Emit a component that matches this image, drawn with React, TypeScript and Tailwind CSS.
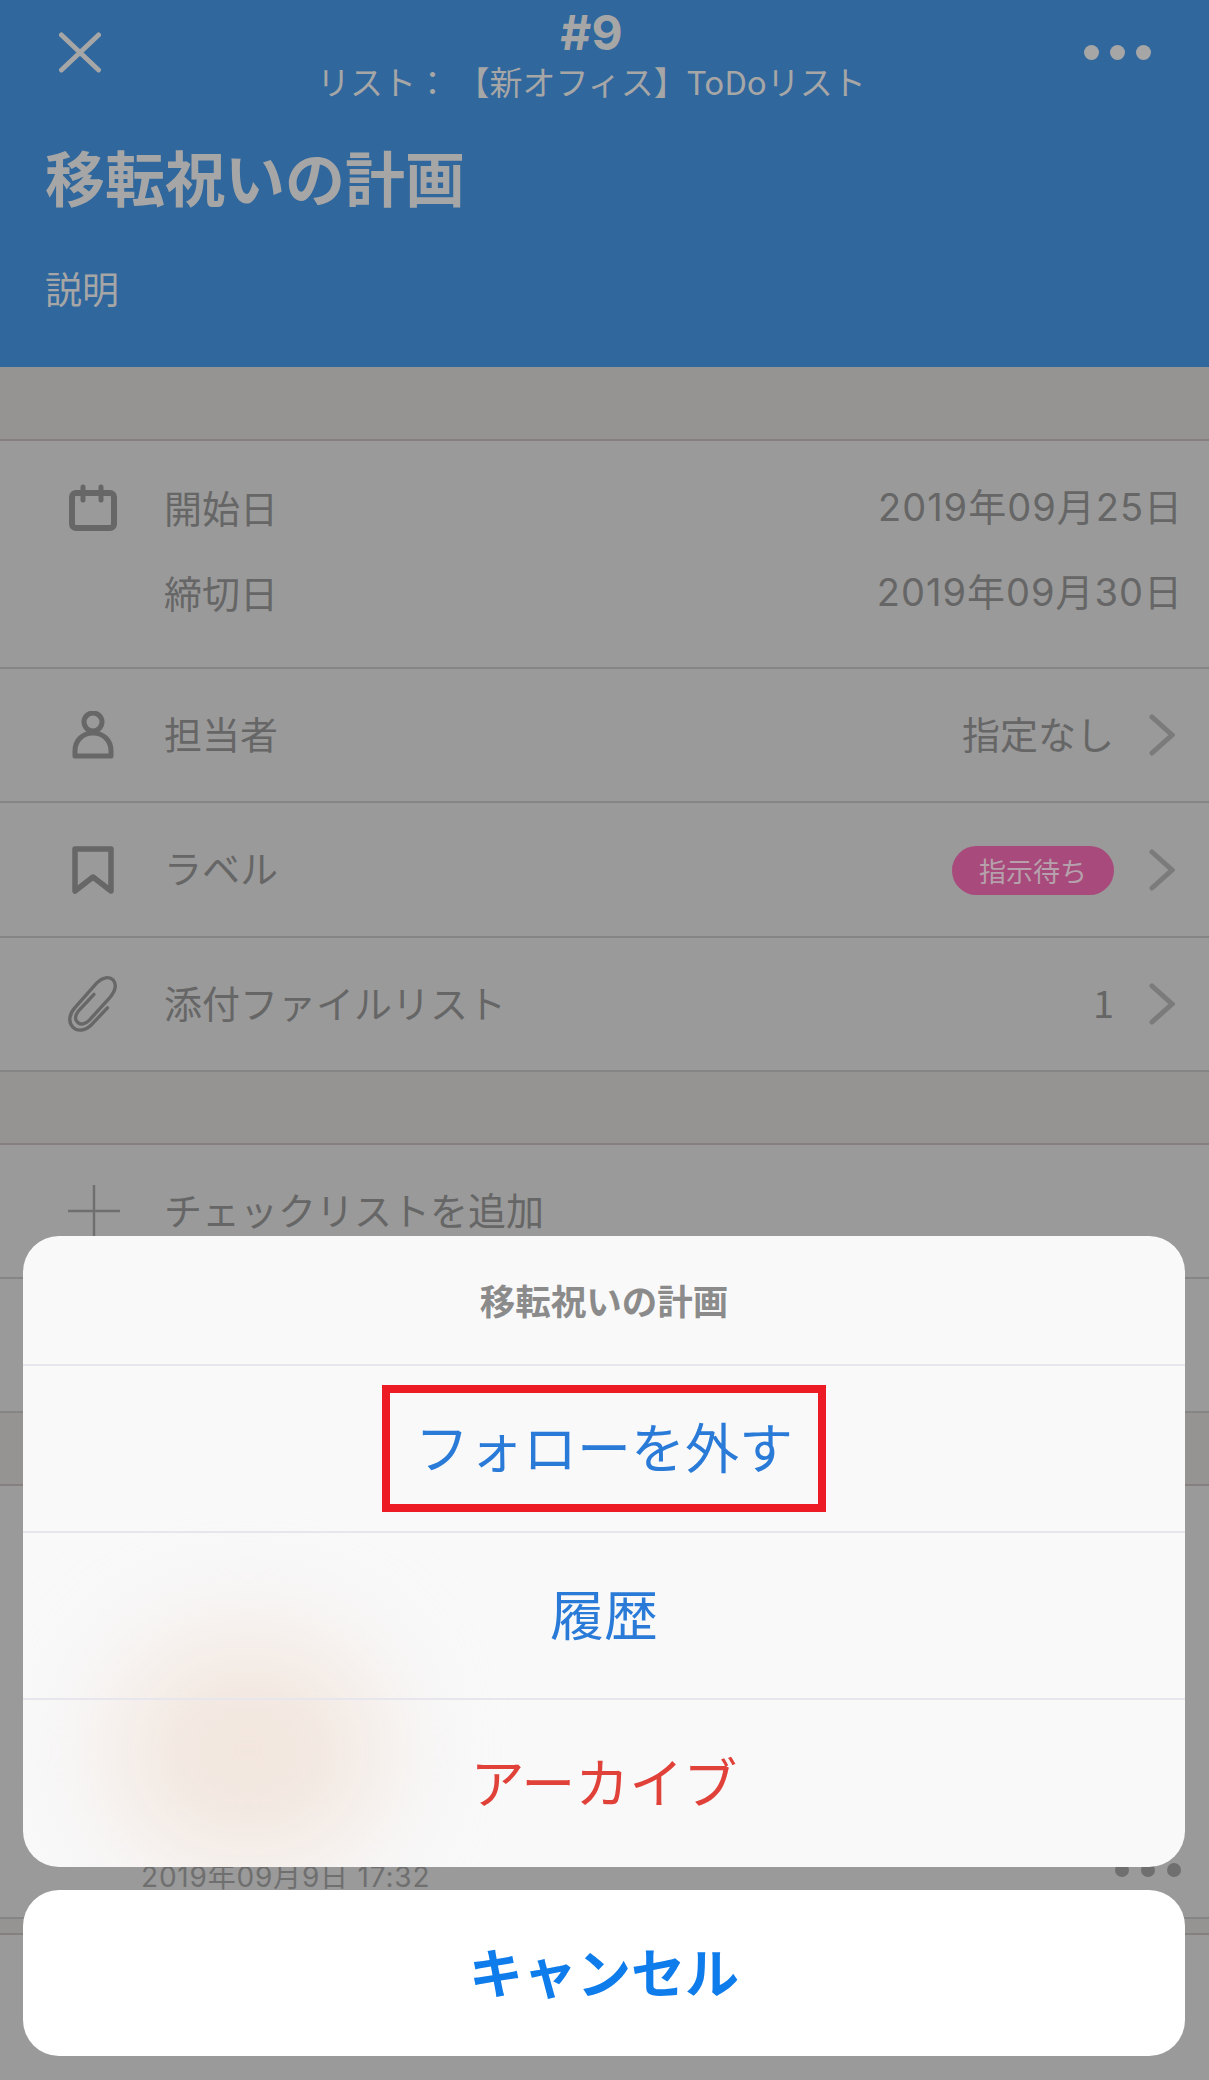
const font = "font-['Noto_Sans_CJK_JP','Noto_Sans',sans-serif]";
const dateFont = "font-['Inter','Noto_Sans_CJK_JP',sans-serif]";

function CalendarIcon() {
  return (
    <svg viewBox="0 0 50 48" className="w-[50px] h-[48px]" fill="none" stroke="#676767" strokeWidth="6" strokeLinecap="round">
      <rect x="4" y="9" width="42" height="35" rx="4" strokeLinejoin="round" />
      <path d="M15 3v13M33 3v13" strokeWidth="5" />
    </svg>
  );
}

function PersonIcon() {
  return (
    <svg viewBox="0 0 50 48" className="w-[50px] h-[48px]" fill="none" stroke="#676767" strokeWidth="5">
      <circle cx="25" cy="11" r="9" />
      <path d="M7 45v-5c0-11 8-18 18-18s18 7 18 18v5z" strokeLinejoin="round" />
    </svg>
  );
}

function BookmarkIcon() {
  return (
    <svg viewBox="0 0 50 48" className="w-[50px] h-[48px]" fill="none" stroke="#676767" strokeWidth="5.5" strokeLinejoin="round" strokeLinecap="round">
      <path d="M7 3h36v42L25 31 7 45z" />
    </svg>
  );
}

function ClipIcon() {
  return (
    <svg viewBox="0 0 52 60" className="w-[50px] h-[58px]" fill="none" stroke="#676767" strokeWidth="3.5" strokeLinecap="round">
      <path d="M27 20 11 37c-4 5-4 10-1 12 3 3 8 2 12-2l21-23c6-7 8-14 4-19-4-4-11-3-17 3L7 34c-7 8-6 16-2 20 5 5 13 4 20-3l16-17" />
    </svg>
  );
}

function PlusIcon() {
  return (
    <svg viewBox="0 0 54 54" className="w-[52px] h-[54px]" stroke="#6f6f6f" strokeWidth="2.5">
      <path d="M27 0v54M0 27h54" />
    </svg>
  );
}

function Chevron() {
  return (
    <svg viewBox="0 0 26 42" className="w-[26px] h-[42px] ml-[35px]" fill="none" stroke="#7b7b7b" strokeWidth="5" strokeLinecap="round">
      <path d="M3 3l20 18L3 39" />
    </svg>
  );
}

function Row({ icon, label, right, chevron = true, height }: { icon: React.ReactNode; label: string; right?: React.ReactNode; chevron?: boolean; height: string }) {
  return (
    <div className={`flex items-center pr-[34px] border-b-2 border-[#858585] ${height}`}>
      <div className="w-[164px] pl-[68px] shrink-0 flex items-center">{icon}</div>
      <span className="pb-[5px] text-[38px] leading-none text-[#666666]">{label}</span>
      <div className="ml-auto flex items-center text-[38px] leading-none text-[#666666]">
        {right}
        {chevron && <Chevron />}
      </div>
    </div>
  );
}

function SheetAction({ children, className }: { children: React.ReactNode; className: string }) {
  return <div className={`flex items-center justify-center h-[167px] pb-[5px] text-[54px] leading-none ${className}`}>{children}</div>;
}

export default function App() {
  return (
    <div className={`relative w-[1209px] h-[2080px] overflow-hidden bg-[#9a9a9a] ${font}`}>
      <header className="h-[367px] bg-[#30679d] text-[#a6a6a6] px-[45px]">
        <div className="relative h-[112px]">
          <svg viewBox="0 0 44 42" className="absolute left-[13px] top-[32px] w-[44px] h-[41px]" stroke="#a6a6a6" strokeWidth="5" strokeLinecap="round">
            <path d="M3 3l38 36M41 3 3 39" />
          </svg>
          <div className="flex flex-col items-center pr-[26px]">
            <span className={`mt-[6px] h-[54px] text-[48px] leading-[54px] font-bold ${dateFont}`}>#9</span>
            <span className="h-[42px] text-[33px] leading-[42px] font-normal">リスト： 【新オフィス】ToDoリスト</span>
          </div>
          <div className="absolute right-[13px] top-[45px] flex gap-[11px]">
            <span className="w-[15px] h-[15px] rounded-full bg-[#a6a6a6]" />
            <span className="w-[15px] h-[15px] rounded-full bg-[#a6a6a6]" />
            <span className="w-[15px] h-[15px] rounded-full bg-[#a6a6a6]" />
          </div>
        </div>
        <h1 className="mt-[25px] h-[78px] text-[60px] leading-[78px] font-bold">移転祝いの計画</h1>
        <p className="mt-[51px] text-[37px] leading-[44px]">説明</p>
      </header>

      <div className="h-[74px] bg-[#959493] border-b-2 border-[#857f80]" />

      <div className="flex h-[228px] border-b-2 border-[#858585]">
        <div className="w-[164px] pl-[68px] pt-[43px] shrink-0">
          <CalendarIcon />
        </div>
        <div className="flex-1 flex flex-col gap-[47px] pt-[47px] pr-[26px] text-[38px] leading-[38px] text-[#666666]">
          <div className="flex justify-between">
            <span>開始日</span>
            <span className={`tracking-[1px] ${dateFont}`}>2019年09月25日</span>
          </div>
          <div className="flex justify-between">
            <span>締切日</span>
            <span className={`tracking-[1px] ${dateFont}`}>2019年09月30日</span>
          </div>
        </div>
      </div>

      <Row height="h-[134px]" icon={<PersonIcon />} label="担当者" right={<span className="pb-[4px]">指定なし</span>} />
      <Row
        height="h-[135px]"
        icon={<BookmarkIcon />}
        label="ラベル"
        right={
          <span className="flex items-center justify-center w-[162px] h-[49px] mt-[2px] rounded-full bg-[#a84a7c] text-[27px] text-[#b5a0ab]">指示待ち</span>
        }
      />
      <Row height="h-[134px]" icon={<ClipIcon />} label="添付ファイルリスト" right={<span className="pb-[4px]">1</span>} />

      <div className="h-[73px] bg-[#959493] border-b-2 border-[#857f80]" />

      <Row height="h-[134px]" icon={<PlusIcon />} label="チェックリストを追加" chevron={false} />
      <div className="h-[134px] border-b-2 border-[#858585]" />
      <div className="h-[73px] bg-[#959493] border-b-2 border-[#857f80]" />

      {/* comment block, mostly behind the sheet */}
      <div className="h-[433px] border-b-2 border-[#858585] flex items-end justify-between pl-[141px] pr-[28px] pb-[24px]">
        <span className={`text-[28px] leading-[32px] tracking-[0.8px] text-[#6f6f6f] ${dateFont}`}>2019年09月9日 17:32</span>
        <div className="flex gap-[12px] mb-[16px]">
          <span className="w-[14px] h-[14px] rounded-full bg-[#6f6f6f]" />
          <span className="w-[14px] h-[14px] rounded-full bg-[#6f6f6f]" />
          <span className="w-[14px] h-[14px] rounded-full bg-[#6f6f6f]" />
        </div>
      </div>
      <div className="h-[16px] bg-[#959493] border-b-2 border-[#857f80]" />

      {/* action sheet */}
      <div className="absolute left-[23px] right-[24px] top-[1236px] flex flex-col gap-[23px]">
        <div className="relative overflow-hidden rounded-[36px] bg-[#f9f9fa] divide-y-2 divide-[#e6e6ec]">
          <div className="absolute left-[85px] top-[395px] w-[280px] h-[240px] rounded-full bg-[#f2e6de] blur-[55px]" />
          <div className="relative flex items-center justify-center h-[130px] text-[35.5px] leading-none font-bold text-[#8b8b8b]">移転祝いの計画</div>
          <SheetAction className="relative text-[#2a7bd8]">
            <div className="absolute left-[359px] top-[19px] w-[444px] h-[127px] border-[8px] border-[#ed1c24]" />
            フォローを外す
          </SheetAction>
          <SheetAction className="relative text-[#2a7bd8]">履歴</SheetAction>
          <SheetAction className="relative text-[#e0423a]">アーカイブ</SheetAction>
        </div>
        <div className="flex items-center justify-center h-[166px] pb-[5px] rounded-[36px] bg-white text-[54px] leading-none font-bold text-[#0f7cec]">キャンセル</div>
      </div>
    </div>
  );
}
